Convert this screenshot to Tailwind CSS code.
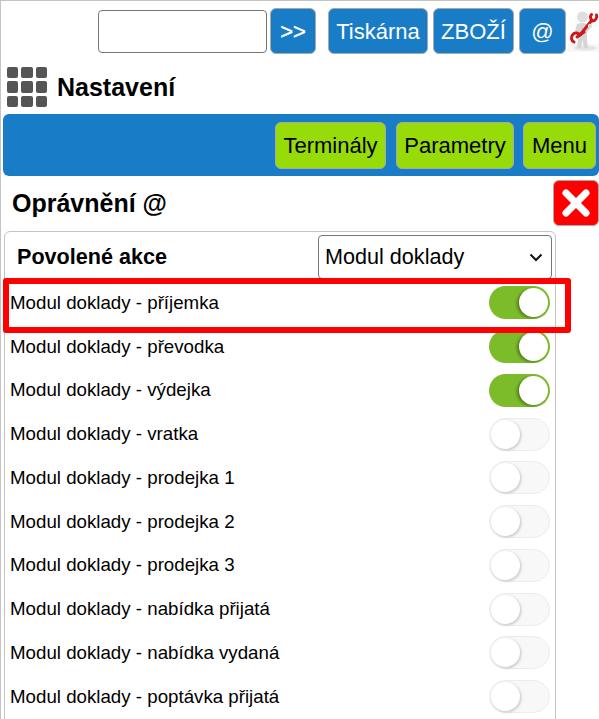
<!DOCTYPE html>
<html lang="cs"><head><meta charset="utf-8"><script src="https://cdn.jsdelivr.net/npm/@tailwindcss/browser@4"></script></head>
<body class="bg-white overflow-hidden font-['Liberation_Sans',Arial,sans-serif] text-black">
<div class="relative w-[599px] h-[719px] overflow-hidden border-t border-l border-[#c4c4c4]">
  <!-- top row -->
  <div class="flex items-center h-[46px] mt-[7px] pl-[97px]">
    <div class="w-[169px] h-[43px] border border-[#767676] rounded-[4px] bg-white"></div>
    <div class="ml-[3px] w-[46px] h-[46px] flex items-center justify-center bg-[#187cc6] border border-[#a9a9a9] rounded-[6px] text-white text-[22px] [-webkit-text-stroke:0.4px_white]">&gt;&gt;</div>
    <div class="ml-[12px] w-[100px] h-[46px] flex items-center justify-center bg-[#187cc6] border border-[#a9a9a9] rounded-[6px] text-white text-[22px]">Tiskárna</div>
    <div class="ml-[5px] w-[81px] h-[46px] flex items-center justify-center bg-[#187cc6] border border-[#a9a9a9] rounded-[6px] text-white text-[22px]">ZBOŽÍ</div>
    <div class="ml-[5px] w-[47px] h-[46px] flex items-center justify-center bg-[#187cc6] border border-[#a9a9a9] rounded-[6px] text-white text-[22px]">@</div>
    <svg class="ml-[2px] shrink-0" width="31" height="46" viewBox="0 0 31 46">
      <rect x="0" y="36" width="31" height="8" fill="#f7f7f7"/>
      <ellipse cx="17" cy="40" rx="11" ry="2.5" fill="#e4e4e4"/>
      <circle cx="14.5" cy="9" r="5.5" fill="#dedede"/>
      <path d="M9 16q5-2 10 0l3 5-3 3 0 8 1 8h-4l-1.500-8-1.500 8h-4l1-9-1-5-2-3z" fill="#d6d6d6"/>
      <g fill="none" stroke="#cc1a1c" stroke-linecap="round">
        <path d="M12 27L24 12" stroke-width="3"/>
        <path d="M23.500 6.500a4.500 4.500 0 0 0 1 6.500 4.500 4.500 0 0 0 4-6" stroke-width="3"/>
        <path d="M16 24L9 29" stroke-width="3"/>
        <path d="M11 26a4.500 4.500 0 0 0-6.500 1 4.500 4.500 0 0 0 1.500 7" stroke-width="3"/>
      </g>
      <circle cx="22" cy="18" r="2.200" fill="#dedede"/>
    </svg>
  </div>
  <!-- title -->
  <div class="flex items-center h-[40px] mt-[13px] pl-[6px] gap-[10px]">
    <div class="grid grid-cols-3 gap-[3px] w-[40px] h-[40px]">
      <span class="bg-[#555] rounded-[2px]"></span><span class="bg-[#555] rounded-[2px]"></span><span class="bg-[#555] rounded-[2px]"></span>
      <span class="bg-[#555] rounded-[2px]"></span><span class="bg-[#555] rounded-[2px]"></span><span class="bg-[#555] rounded-[2px]"></span>
      <span class="bg-[#555] rounded-[2px]"></span><span class="bg-[#555] rounded-[2px]"></span><span class="bg-[#555] rounded-[2px]"></span>
    </div>
    <div class="text-[25px] font-bold leading-none">Nastavení</div>
  </div>
  <!-- blue bar -->
  <div class="ml-[2px] mt-[7px] w-[596px] h-[62px] bg-[#187cc6] rounded-[6px] flex items-center justify-end pr-[3px] gap-[9px]">
    <div class="mr-[1px] w-[111px] h-[47px] flex items-center justify-center bg-[#97db08] border border-[#a9a9a9] rounded-[6px] text-[22px]">Terminály</div>
    <div class="w-[118px] h-[47px] flex items-center justify-center bg-[#97db08] border border-[#a9a9a9] rounded-[6px] text-[22px]">Parametry</div>
    <div class="w-[73px] h-[47px] flex items-center justify-center bg-[#97db08] border border-[#a9a9a9] rounded-[6px] text-[22px]">Menu</div>
  </div>
  <!-- subtitle -->
  <div class="flex items-start justify-between h-[55px] pt-[4px] pl-[11px]">
    <div class="text-[25px] font-bold leading-none mt-[11px]">Oprávnění @</div>
    <div class="w-[46px] h-[46px] flex items-center justify-center bg-[#fe0000] border border-[#a9a9a9] rounded-[6px]">
      <svg width="30" height="30" viewBox="0 0 30 30"><path d="M5 5L25 25M25 5L5 25" stroke="#fff" stroke-width="7" stroke-linecap="round"/></svg>
    </div>
  </div>
  <!-- panel -->
  <div class="ml-[3px] w-[552px] border border-[#c4c4c4] rounded-t-[6px] h-[600px]">
    <div class="flex items-center justify-between h-[49px] pl-[12px] pr-[3px] pt-[1px]">
      <div class="text-[21.6px] font-bold">Povolené akce</div>
      <div class="relative w-[234px] h-[44px] border border-[#767676] rounded-[4px] flex items-center pl-[6px] text-[21.6px]">
        Modul doklady
        <svg class="absolute right-[8px] top-[17px]" width="14" height="9" viewBox="0 0 14 9"><path d="M1.5 1.5L7 7l5.5-5.5" fill="none" stroke="#111" stroke-width="2"/></svg>
      </div>
    </div>
    <div class="flex flex-col">
      <div class="flex items-center justify-between h-[43.75px] pl-[5px] pr-[5px] text-[18.72px]">Modul doklady - příjemka
        <div class="relative w-[61px] h-[33px] rounded-full bg-[#7cbc2a]"><span class="absolute right-[2px] top-[2px] w-[29px] h-[29px] rounded-full bg-white shadow-[-2px_1px_3px_rgba(0,0,0,0.35)]"></span></div></div>
      <div class="flex items-center justify-between h-[43.75px] pl-[5px] pr-[5px] text-[18.72px]">Modul doklady - převodka
        <div class="relative w-[61px] h-[33px] rounded-full bg-[#7cbc2a]"><span class="absolute right-[2px] top-[2px] w-[29px] h-[29px] rounded-full bg-white shadow-[-2px_1px_3px_rgba(0,0,0,0.35)]"></span></div></div>
      <div class="flex items-center justify-between h-[43.75px] pl-[5px] pr-[5px] text-[18.72px]">Modul doklady - výdejka
        <div class="relative w-[61px] h-[33px] rounded-full bg-[#7cbc2a]"><span class="absolute right-[2px] top-[2px] w-[29px] h-[29px] rounded-full bg-white shadow-[-2px_1px_3px_rgba(0,0,0,0.35)]"></span></div></div>
      <div class="flex items-center justify-between h-[43.75px] pl-[5px] pr-[5px] text-[18.72px]">Modul doklady - vratka
        <div class="relative w-[61px] h-[33px] rounded-full bg-[#f8f8f8] border border-[#ececec]"><span class="absolute left-[1px] top-[1px] w-[29px] h-[29px] rounded-full bg-white shadow-[1px_1px_3px_rgba(0,0,0,0.22)]"></span></div></div>
      <div class="flex items-center justify-between h-[43.75px] pl-[5px] pr-[5px] text-[18.72px]">Modul doklady - prodejka 1
        <div class="relative w-[61px] h-[33px] rounded-full bg-[#f8f8f8] border border-[#ececec]"><span class="absolute left-[1px] top-[1px] w-[29px] h-[29px] rounded-full bg-white shadow-[1px_1px_3px_rgba(0,0,0,0.22)]"></span></div></div>
      <div class="flex items-center justify-between h-[43.75px] pl-[5px] pr-[5px] text-[18.72px]">Modul doklady - prodejka 2
        <div class="relative w-[61px] h-[33px] rounded-full bg-[#f8f8f8] border border-[#ececec]"><span class="absolute left-[1px] top-[1px] w-[29px] h-[29px] rounded-full bg-white shadow-[1px_1px_3px_rgba(0,0,0,0.22)]"></span></div></div>
      <div class="flex items-center justify-between h-[43.75px] pl-[5px] pr-[5px] text-[18.72px]">Modul doklady - prodejka 3
        <div class="relative w-[61px] h-[33px] rounded-full bg-[#f8f8f8] border border-[#ececec]"><span class="absolute left-[1px] top-[1px] w-[29px] h-[29px] rounded-full bg-white shadow-[1px_1px_3px_rgba(0,0,0,0.22)]"></span></div></div>
      <div class="flex items-center justify-between h-[43.75px] pl-[5px] pr-[5px] text-[18.72px]">Modul doklady - nabídka přijatá
        <div class="relative w-[61px] h-[33px] rounded-full bg-[#f8f8f8] border border-[#ececec]"><span class="absolute left-[1px] top-[1px] w-[29px] h-[29px] rounded-full bg-white shadow-[1px_1px_3px_rgba(0,0,0,0.22)]"></span></div></div>
      <div class="flex items-center justify-between h-[43.75px] pl-[5px] pr-[5px] text-[18.72px]">Modul doklady - nabídka vydaná
        <div class="relative w-[61px] h-[33px] rounded-full bg-[#f8f8f8] border border-[#ececec]"><span class="absolute left-[1px] top-[1px] w-[29px] h-[29px] rounded-full bg-white shadow-[1px_1px_3px_rgba(0,0,0,0.22)]"></span></div></div>
      <div class="flex items-center justify-between h-[43.75px] pl-[5px] pr-[5px] text-[18.72px]">Modul doklady - poptávka přijatá
        <div class="relative w-[61px] h-[33px] rounded-full bg-[#f8f8f8] border border-[#ececec]"><span class="absolute left-[1px] top-[1px] w-[29px] h-[29px] rounded-full bg-white shadow-[1px_1px_3px_rgba(0,0,0,0.22)]"></span></div></div>
    </div>
  </div>
  <!-- red annotation -->
  <div class="absolute left-[2px] top-[277px] w-[568px] h-[55px] border-[6px] border-[#fe0000] rounded-[3px]"></div>
</div>
</body></html>
